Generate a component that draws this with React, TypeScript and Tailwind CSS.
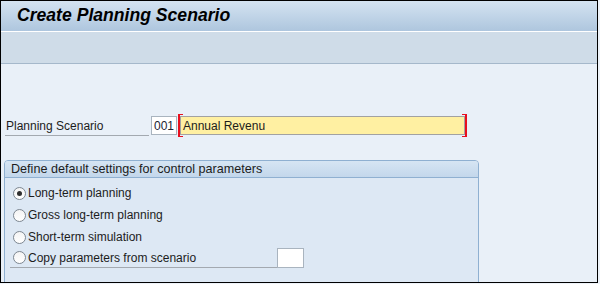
import React from "react";

const font = { fontFamily: '"Liberation Sans", Arial, sans-serif' };

function Radio({ checked }: { checked?: boolean }) {
  return (
    <span className="w-[13px] h-[13px] rounded-full border border-[#7d8791] bg-gradient-to-b from-[#f4f4f4] to-white flex items-center justify-center shrink-0">
      {checked && <span className="w-[5px] h-[5px] rounded-full bg-[#2f2f2f]" />}
    </span>
  );
}

function RadioRow({ label, checked }: { label: string; checked?: boolean }) {
  return (
    <div className="h-[22px] flex items-center pl-[8px] gap-[2px]">
      <Radio checked={checked} />
      <span className="text-[12px] text-[#1c1c1c] leading-none">{label}</span>
    </div>
  );
}

export default function App() {
  return (
    <div className="w-[600px] h-[284px] bg-[#eef3f9]" style={font}>
      <div className="w-[598px] h-[283px] border border-black overflow-hidden bg-[#e9f0f8] flex flex-col">
        <div className="h-[30px] shrink-0 bg-gradient-to-b from-[#d4e3f1] to-[#aec6de] flex items-center pl-[16px]">
          <span className="text-[17.6px] font-bold italic text-black leading-none">Create Planning Scenario</span>
        </div>
        <div className="h-[1px] shrink-0 bg-white" />
        <div className="h-[32px] shrink-0 bg-[#cfdce8] border-b border-[#a5b8cb]" />
        <div className="pt-[50px] flex flex-col">
          <div className="pl-[4px] flex items-start h-[23px]">
            <div className="w-[144px] h-[22px] border-b border-[#a3a9b0] flex items-end pb-[3px] pl-[1px]">
              <span className="text-[12px] text-[#1c1c1c] leading-none">Planning Scenario</span>
            </div>
            <div className="ml-[2px] mt-[2px] w-[26px] h-[19px] border border-[#a9b4bf] bg-white flex items-center pl-[2px]">
              <span className="text-[12px] text-[#1c2433] leading-none">001</span>
            </div>
            <div className="relative ml-[3px] mt-[2px] w-[285px] h-[19px] border border-[#a2a2a2] bg-[#fff0a2] flex items-center pl-[2px]">
              <span className="text-[12px] text-[#1c1c1c] leading-none">Annual Revenu</span>
              <span className="absolute left-[-3px] top-[-3px] w-[5px] h-[23px] border-l-2 border-y-[1.5px] border-[#e8101f]" />
              <span className="absolute right-[-3px] top-[-3px] w-[5px] h-[23px] border-r-2 border-y-[1.5px] border-[#e8101f]" />
            </div>
          </div>
          <div className="ml-[3px] mt-[23px] w-[475px] h-[200px] border border-[#8fb0d1] rounded-t-[4px] bg-[#dde8f4] flex flex-col">
            <div className="h-[17px] shrink-0 bg-gradient-to-b from-[#d6e5f3] to-[#c3d7eb] border-b border-[#8fb0d1] rounded-t-[3px] flex items-center pl-[6px]">
              <span className="text-[12.6px] text-[#1c1c1c] leading-none">Define default settings for control parameters</span>
            </div>
            <div className="pt-[4px] flex flex-col">
              <RadioRow label="Long-term planning" checked />
              <RadioRow label="Gross long-term planning" />
              <RadioRow label="Short-term simulation" />
              <div className="h-[22px] flex items-start">
                <div className="ml-[5px] w-[267px] h-[20px] border-b border-[#a3a9b0] flex items-center pl-[3px] gap-[2px]">
                  <Radio />
                  <span className="text-[12px] text-[#1c1c1c] leading-none">Copy parameters from scenario</span>
                </div>
                <div className="w-[27px] h-[20px] border border-[#a9b4bf] bg-white" />
              </div>
            </div>
          </div>
        </div>
      </div>
    </div>
  );
}
